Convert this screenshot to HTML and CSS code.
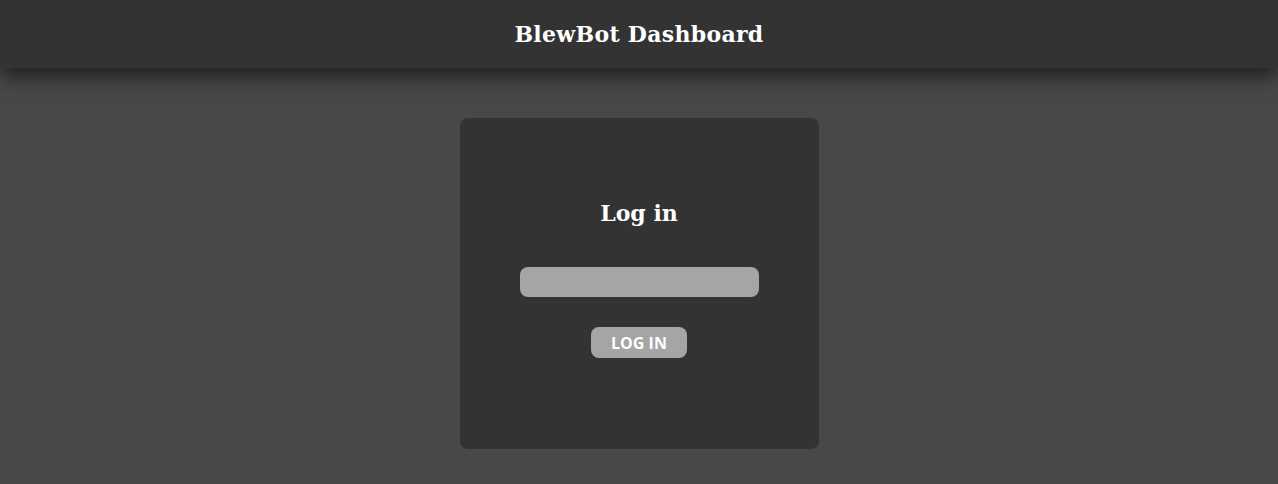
FILE: index.html
```html
<!DOCTYPE html>
<html>
<head>
<meta charset="utf-8">
<link rel="stylesheet" href="styles.css">
</head>
<body>
<header class="topbar"><h1 class="title">BlewBot Dashboard</h1></header>
<main class="main">
  <section class="card">
    <h2 class="card-title">Log in</h2>
    <input class="field" type="password">
    <button class="btn">LOG IN</button>
  </section>
</main>
</body>
</html>
```
FILE: styles.css
```css
html, body { margin: 0; padding: 0; }
body {
  background: #484848;
  height: 484px;
  overflow: hidden;
  font-family: "Open Sans", sans-serif;
}
.topbar {
  height: 68px;
  background: #333333;
  display: flex;
  align-items: center;
  justify-content: center;
  box-shadow: 0 8px 20px rgba(0,0,0,0.6);
  position: relative;
  z-index: 1;
}
.title {
  margin: 0;
  color: #fff;
  font-family: "DejaVu Serif", serif;
  font-weight: bold;
  font-size: 22px;
  letter-spacing: 0.3px;
}
.main {
  display: flex;
  justify-content: center;
  padding-top: 50px;
}
.card {
  width: 359px;
  height: 331px;
  box-sizing: border-box;
  background: #333333;
  border-radius: 8px;
  display: flex;
  flex-direction: column;
  align-items: center;
  padding-top: 80px;
}
.card-title {
  margin: 0;
  color: #fff;
  font-family: "DejaVu Serif", serif;
  font-weight: bold;
  font-size: 22px;
  line-height: 30px;
}
.field {
  margin-top: 39px;
  width: 239px;
  height: 30px;
  box-sizing: border-box;
  border: none;
  border-radius: 8px;
  background: #a5a5a5;
  outline: none;
}
.btn {
  margin-top: 30px;
  width: 96px;
  height: 31px;
  border: none;
  border-radius: 8px;
  background: #a5a5a5;
  color: #fff;
  font-family: "Open Sans", sans-serif;
  font-weight: bold;
  font-size: 16px;
  padding: 0;
}
```
